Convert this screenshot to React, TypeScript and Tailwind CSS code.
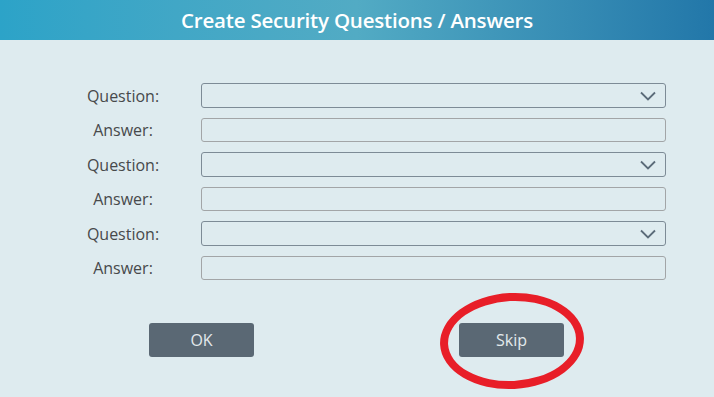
import React from "react";

const rows = ["Question", "Answer", "Question", "Answer", "Question", "Answer"];

function Chevron() {
  return (
    <svg width="16" height="10" viewBox="0 0 16 10" fill="none" className="shrink-0">
      <path d="M1 1.5 L8 8.5 L15 1.5" stroke="#5b6b79" strokeWidth="1.8" />
    </svg>
  );
}

export default function App() {
  return (
    <div
      className="relative w-[714px] h-[397px] bg-[#deebef] overflow-hidden"
      style={{ fontFamily: '"Open Sans", "Noto Sans", sans-serif' }}
    >
      {/* Title bar */}
      <div className="h-[40px] flex items-center justify-center bg-gradient-to-r from-[#2ca3c8] via-[#52abc4] to-[#2277a9]">
        <h1 className="text-white text-[20.5px] font-semibold tracking-[-0.2px]">
          Create Security Questions / Answers
        </h1>
      </div>

      {/* Form */}
      <div className="pt-[43px] pl-[60px] grid grid-cols-[126px_465px] gap-x-[15px] gap-y-[10px] items-center">
        {rows.map((label, i) => (
          <React.Fragment key={i}>
            <div className="text-center text-[16px] text-[#47494b] leading-none">{label}:</div>
            {label === "Question" ? (
              <div className="h-[25px] rounded-[3px] border border-[#7d8b96] flex items-center justify-end pr-[9px]">
                <Chevron />
              </div>
            ) : (
              <div className="h-[24px] rounded-[3px] border border-[#a2a5a7]" />
            )}
          </React.Fragment>
        ))}
      </div>

      {/* Buttons */}
      <div className="mt-[43px] pl-[149px] flex gap-[205px]">
        <button className="w-[105px] h-[34px] rounded-[3px] bg-[#5a6874] text-[#e3e9ec] text-[16px] font-medium">OK</button>
        <button className="w-[105px] h-[34px] rounded-[3px] bg-[#5a6874] text-[#e3e9ec] text-[16px] font-medium">Skip</button>
      </div>

      {/* Red annotation ellipse */}
      <div className="absolute left-[440px] top-[293px] w-[144px] h-[96px] rounded-[50%] border-[8px] border-[#e81e28] -rotate-3" />
    </div>
  );
}
